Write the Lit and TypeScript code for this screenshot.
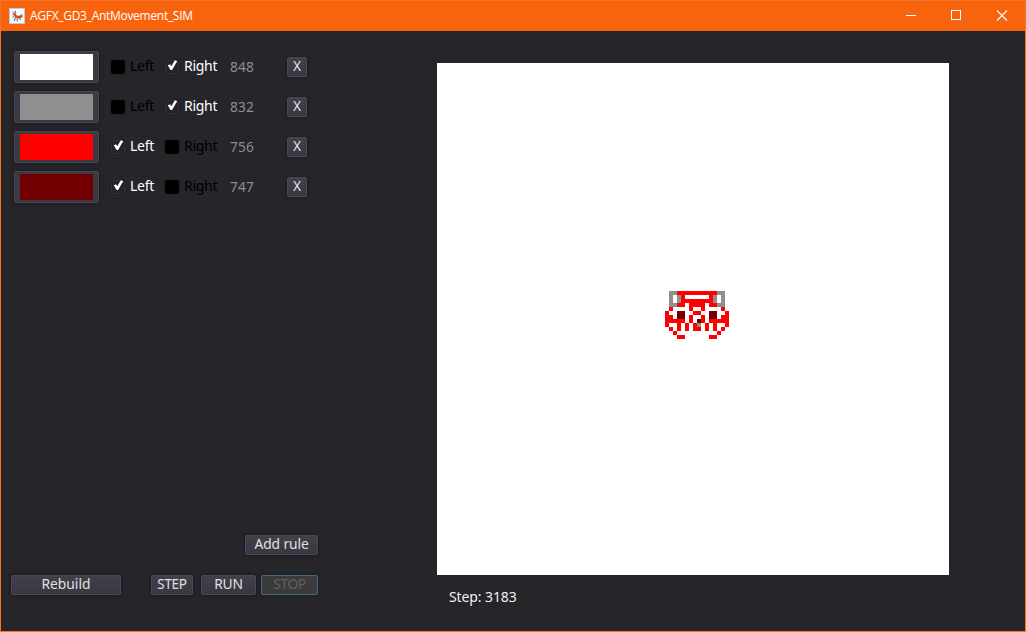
import { LitElement, html, css, svg } from "lit";
import { customElement, property } from "lit/decorators.js";
import { classMap } from "lit/directives/class-map.js";

type Turn = "left" | "right";
interface Rule { color: string; turn: Turn; }

const RULES: Rule[] = [
  { color: "#ffffff", turn: "right" },
  { color: "#8f8f8f", turn: "right" },
  { color: "#ff0000", turn: "left" },
  { color: "#720000", turn: "left" },
];
const SIZE = 128;
const STEPS = 3183;
const MOVES = [[0, -1], [1, 0], [0, 1], [-1, 0]];

/** Runs the ant from the centre of the board, facing west. */
function simulate(rules: Rule[], steps: number) {
  const grid = new Uint8Array(SIZE * SIZE);
  const counts = rules.map(() => 0);
  let x = SIZE / 2, y = SIZE / 2, dir = 3;
  for (let i = 0; i < steps; i++) {
    const at = y * SIZE + x;
    const s = grid[at];
    counts[s]++;
    dir = (dir + (rules[s].turn === "right" ? 1 : 3)) % 4;
    grid[at] = (s + 1) % rules.length;
    x += MOVES[dir][0];
    y += MOVES[dir][1];
  }
  return { grid, counts, x, y };
}

@customElement("sim-check")
export class SimCheck extends LitElement {
  @property() label = "";
  @property({ type: Boolean }) checked = false;
  static styles = css`
    :host { display: flex; align-items: flex-start; height: 24px; color: #000; }
    :host([checked]) { color: #fff; }
    .box { box-sizing: border-box; width: 14px; height: 14px; margin-top: 5px; border-radius: 3px; background: #000; box-shadow: 0 0 1px #111; }
    .box.on { background: #252429; border: 1px solid #323137; }
    svg { display: block; width: 12px; height: 12px; overflow: visible; }
    .label { margin-left: 5px; line-height: 22px; white-space: nowrap; letter-spacing: -0.3px; }
  `;
  render() {
    return html`<div class=${classMap({ box: true, on: this.checked })}>
      ${this.checked ? html`<svg viewBox="0 0 12 12"><path d="M1.8 4.2L4 3.2L5.2 5.2L8.9 -.7L11.2 .2L6.1 9L4.5 9Z" fill="#fff"/></svg>` : ""}
    </div><span class="label">${this.label}</span>`;
  }
}

@customElement("app-root")
export class AppRoot extends LitElement {
  static styles = css`
    :host { display: block; width: 1026px; height: 632px; font: 14px "Noto Sans", sans-serif; }
    * { box-sizing: border-box; }
    .window { display: flex; flex-direction: column; width: 1026px; height: 632px; background: #26252a; border: 1px solid #f97420; }
    .title { display: flex; align-items: center; height: 30px; flex: none; background: #f8640d; color: #fff; font: 12px "Open Sans", sans-serif; letter-spacing: -0.29px; padding-left: 8px; }
    .title .name { margin-left: 5px; flex: 1; line-height: 28px; }
    .title svg { display: block; }
    .body { display: flex; flex: 1; }
    .side { display: flex; flex-direction: column; width: 317px; padding: 20px 0 36px 10px; }
    .rules { display: flex; flex-direction: column; gap: 8px; padding-left: 3px; }
    .rule { display: flex; height: 32px; }
    .swatch { width: 85px; height: 32px; padding: 3px 6px; background: #3b3943; border: 1px solid #47454f; border-radius: 2px; box-shadow: 0 0 3px #17161a; }
    .swatch i { display: block; width: 73px; height: 26px; margin: -1px; }
    .left { width: 54px; margin: 4px 0 0 12px; }
    .right { width: 65px; margin-top: 4px; }
    .count { width: 57px; color: #8e8e90; line-height: 32px; font-size: 13.7px; letter-spacing: .15px; }
    .btn { display: flex; justify-content: center; height: 20px; border: 1px solid #4b4954; border-radius: 2px; background: linear-gradient(#42404a, #393740); color: #e0e0e0; line-height: 16px; font-size: 13.8px; white-space: nowrap; box-shadow: 0 0 3px #17161a; }
    .x { width: 20px; margin-top: 6px; }
    .add { width: 73px; margin: auto 0 20px auto; letter-spacing: -0.1px; }
    .controls { display: flex; }
    .rebuild { width: 110px; margin-right: 30px; }
    .step { width: 42px; margin-right: 8px; font-size: 13.5px; letter-spacing: -0.3px; }
    .run { width: 55px; margin-right: 5px; letter-spacing: -0.2px; }
    .stop { width: 57px; color: #5f5f60; background: #3b3b3c; border-color: #456a80; letter-spacing: -0.4px; }
    .view { padding: 32px 0 0 119px; }
    .board { display: block; width: 512px; height: 512px; background: #fff; }
    .status { margin: 12px 0 0 12px; line-height: 20px; color: #f0f0f0; letter-spacing: -0.1px; }
  `;

  render() {
    const sim = simulate(RULES, STEPS);
    const cells: unknown[] = [];
    sim.grid.forEach((s, i) => {
      if (s) cells.push(svg`<rect x=${i % SIZE} y=${Math.floor(i / SIZE)} width="1" height="1" fill=${RULES[s].color}/>`);
    });
    return html`<div class="window">
      <div class="title">
        <svg width="16" height="16" viewBox="0 0 16 16">
          <rect width="16" height="16" fill="#b9cdd5"/><rect x="1" y="1" width="14" height="14" fill="#f5f8fa"/>
          <path d="M3.5 3.5L6.5 6M6 2.5L6.8 5.5" stroke="#56607a" stroke-width=".9"/>
          <path d="M3 6L6 5L7.5 7.2L10 8L13.5 6L13.3 9.5L10 10.5L6.5 9.3L5 7.5Z" fill="#cf4a20"/>
          <path d="M6.5 9L5.3 13M8 9.5L8.3 13.5M10.5 10L11.5 12M5.5 8L3.5 9.5" stroke="#6d4a52" stroke-width=".9" fill="none"/>
        </svg>
        <span class="name">AGFX_GD3_AntMovement_SIM</span>
        <svg width="120" height="28" viewBox="0 0 120 28" fill="none" stroke="#fff">
          <path d="M1 13.5H11M46.5 8.5H55.5V17.5H46.5Z" shape-rendering="crispEdges"/>
          <path d="M92 8.5L102 18.5M102 8.5L92 18.5" stroke-width="1.1"/>
        </svg>
      </div>
      <div class="body">
        <div class="side">
          <div class="rules">${RULES.map((r, i) => html`<div class="rule">
            <div class="swatch"><i style="background:${r.color}"></i></div>
            <sim-check class="left" label="Left" ?checked=${r.turn === "left"}></sim-check>
            <sim-check class="right" label="Right" ?checked=${r.turn === "right"}></sim-check>
            <span class="count">${sim.counts[i]}</span>
            <div class="btn x">X</div>
          </div>`)}</div>
          <div class="btn add">Add rule</div>
          <div class="controls">
            <div class="btn rebuild">Rebuild</div><div class="btn step">STEP</div>
            <div class="btn run">RUN</div><div class="btn stop">STOP</div>
          </div>
        </div>
        <div class="view">
          <svg class="board" viewBox="0 0 128 128" shape-rendering="crispEdges">${cells}
            <rect x=${sim.x} y=${sim.y + 1} width="1" height="1" fill="#8f8f8f"/>
          </svg>
          <div class="status">Step: ${STEPS}</div>
        </div>
      </div>
    </div>`;
  }
}
